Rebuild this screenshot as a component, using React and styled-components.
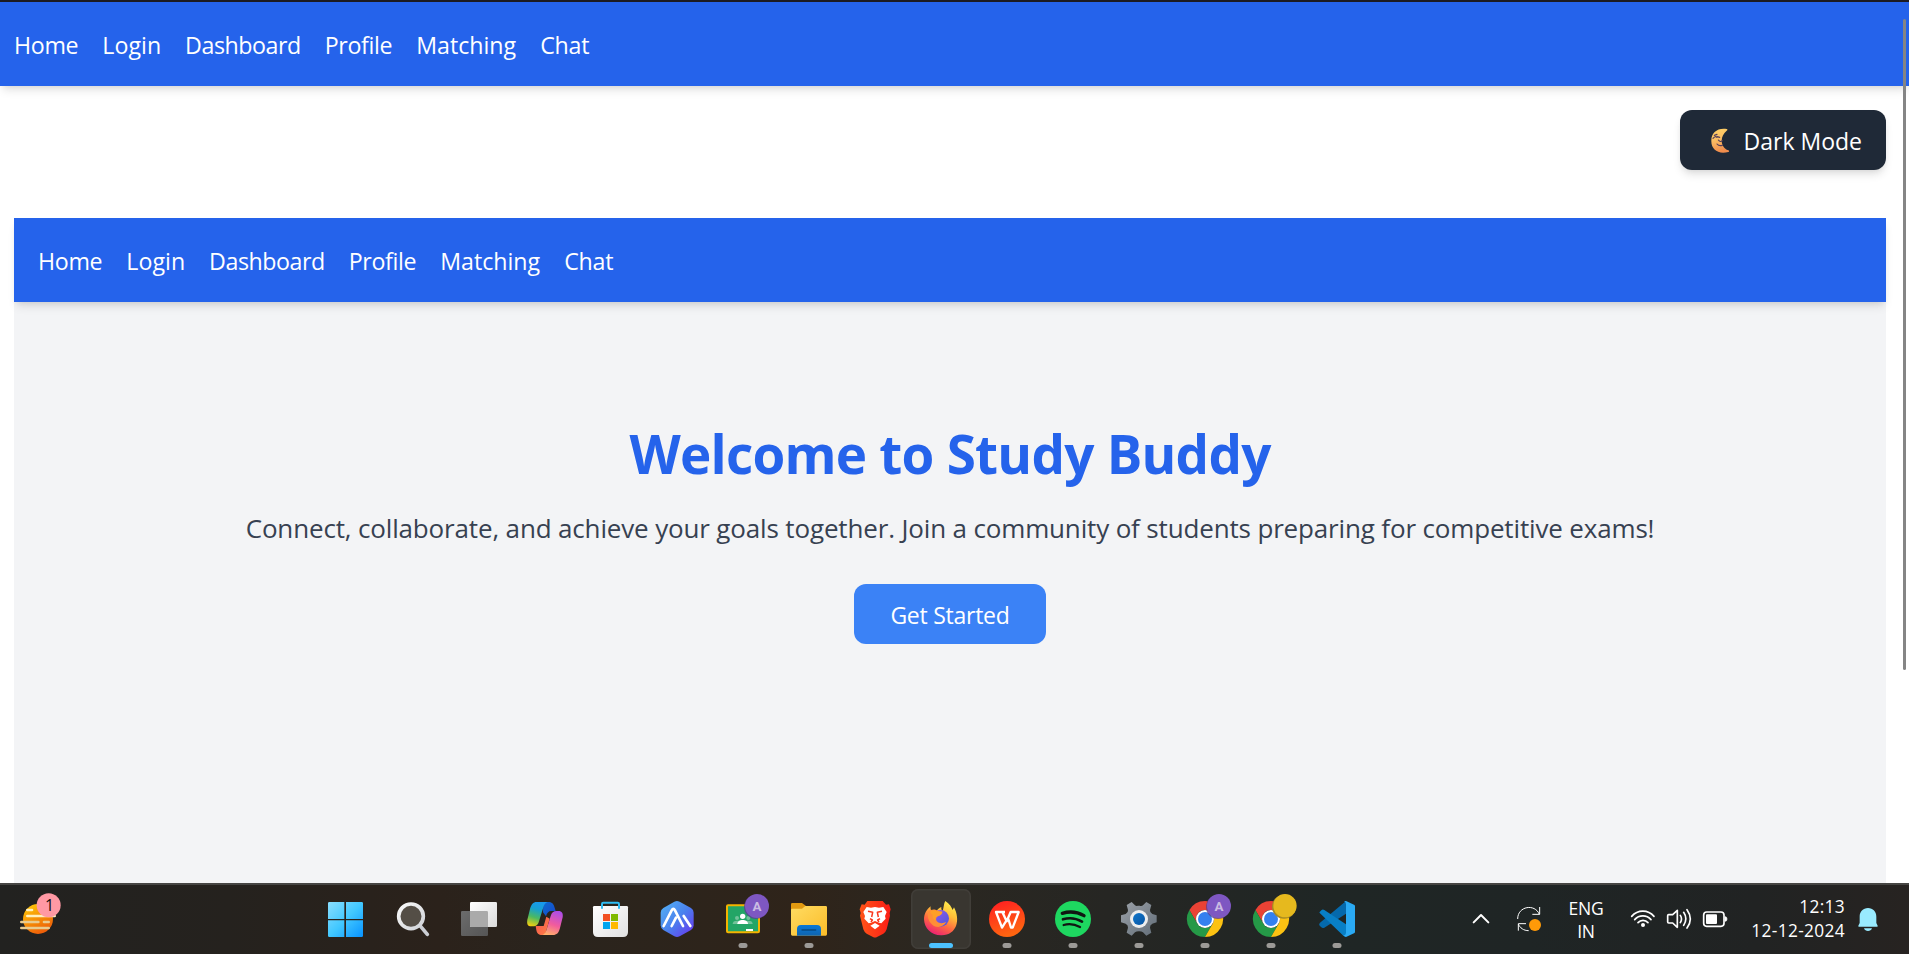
import React from "react";
import styled, { createGlobalStyle } from "styled-components";

const GlobalStyle = createGlobalStyle`
  *, *::before, *::after { box-sizing: border-box; }
  html, body { margin: 0; padding: 0; overflow: hidden; }
  body {
    background: #fff;
    font-family: "Open Sans", "Noto Sans", sans-serif;
  }
  h1, p { margin: 0; }
  button { font: inherit; border: 0; cursor: pointer; }
`;

const Screen = styled.div`
  display: flex;
  flex-direction: column;
  width: 1909px;
  height: 954px;
  overflow: hidden;
`;

const Browser = styled.div`
  position: relative;
  flex: 1;
  min-height: 0;
  overflow: hidden;
  background: #fff;
  border-top: 2px solid #1c1b22;
`;

const ScrollThumb = styled.div`
  position: absolute;
  top: 17px;
  right: 3px;
  width: 3px;
  height: 651px;
  border-radius: 2px;
  background: #858585;
`;

const NavBar = styled.nav`
  display: flex;
  align-items: center;
  gap: 24px;
  height: 84px;
  padding: 2px ${(p) => p.$inset}px 0;
  background: #2563eb;
  box-shadow: 0 6px 9px -1.5px rgba(0, 0, 0, 0.1), 0 3px 6px -3px rgba(0, 0, 0, 0.1);
`;

const NavLink = styled.a`
  width: ${(p) => p.$width}px;
  color: #fff;
  font-size: 23.2px;
  line-height: 36px;
  letter-spacing: ${(p) => p.$tracking}px;
  white-space: nowrap;
  text-decoration: none;
`;

const Content = styled.main`
  padding: 24px 23px 0 14px;
`;

const ThemeRow = styled.div`
  display: flex;
  justify-content: flex-end;
  margin-bottom: 48px;
`;

const ThemeButton = styled.button`
  display: flex;
  align-items: center;
  justify-content: space-between;
  width: 206px;
  height: 60px;
  padding: 2px 24px 0 30px;
  border-radius: 12px;
  background: #1f2937;
  color: #fff;
  font-size: 23px;
  line-height: 36px;
  box-shadow: 0 6px 9px -1.5px rgba(0, 0, 0, 0.1), 0 3px 6px -3px rgba(0, 0, 0, 0.1);
`;

const Panel = styled.section`
  height: 900px;
  background: #f3f4f6;
`;

const Hero = styled.div`
  display: flex;
  flex-direction: column;
  align-items: center;
  padding-top: 122px;
`;

const Title = styled.h1`
  color: #2563eb;
  font-size: 53px;
  font-weight: 700;
  line-height: 60px;
  letter-spacing: -0.75px;
  white-space: nowrap;
`;

const Lead = styled.p`
  margin-top: 23px;
  color: #374151;
  font-size: 26px;
  line-height: 42px;
  letter-spacing: -0.155px;
  white-space: nowrap;
`;

const StartButton = styled.button`
  width: 192px;
  height: 60px;
  margin-top: 35px;
  padding: 1px 0 0;
  border-radius: 12px;
  background: #3b82f6;
  color: #fff;
  font-size: 23px;
  line-height: 36px;
  letter-spacing: -0.25px;
`;

const Taskbar = styled.footer`
  display: flex;
  align-items: flex-start;
  height: 71px;
  border-top: 2px solid #464543;
  background: linear-gradient(90deg, #222220 0%, #25221e 12%, #2b221b 23%, #2a241d 29%, #2f241a 42%, #2a2721 50%, #262623 58%, #1f2625 70%, #1f2525 80%, #212323 92%, #272321 100%);
`;

const Weather = styled.div`
  width: 317px;
  padding: 4px 0 0 15px;
`;

const AppList = styled.div`
  display: flex;
  gap: 6px;
  padding-top: 4px;
`;

const AppButton = styled.div`
  position: relative;
  width: 60px;
  height: 60px;
  border-radius: 7px;
  background: ${(p) => (p.$active ? "#393630" : "transparent")};
  box-shadow: ${(p) => (p.$active ? "inset 0 0 0 1.5px #413e39" : "none")};

  &::after {
    content: "";
    position: absolute;
    bottom: 1px;
    left: 50%;
    transform: translateX(-50%);
    width: ${(p) => (p.$active ? 24 : 9)}px;
    height: 5px;
    border-radius: 3px;
    background: ${(p) => (p.$active ? "#4cc2ff" : p.$running ? "#9c9a97" : "transparent")};
  }
`;

const Glyph = styled.svg`
  display: block;
  flex: none;
`;

const Tray = styled.div`
  display: flex;
  align-items: center;
  margin-left: auto;
  height: 68px;
  padding-right: 29px;
  color: #fff;
`;

const StatusIcons = styled.div`
  display: flex;
  gap: 9px;
  margin-left: 19px;
`;

const Language = styled.div`
  width: 50px;
  margin-left: 17px;
  padding-top: 1px;
  font-size: 17.5px;
  line-height: 23px;
  letter-spacing: -0.2px;
  text-align: center;
`;

const SyncButton = styled.div`
  margin-left: 22px;
`;

const Clock = styled.div`
  width: 116px;
  margin-right: 11px;
  font-size: 17.3px;
  line-height: 24px;
  letter-spacing: 0.35px;
  text-align: right;
`;

const links = [
  ["Home", 64.3, -0.3],
  ["Login", 58.8, 0.05],
  ["Dashboard", 115.6, -0.45],
  ["Profile", 67.5, -0.33],
  ["Matching", 100, 0],
  ["Chat", 48.8, -0.2],
];

function Navigation({ inset }) {
  return (
    <NavBar $inset={inset}>
      {links.map(([label, width, tracking]) => (
        <NavLink key={label} $width={width} $tracking={tracking}>
          {label}
        </NavLink>
      ))}
    </NavBar>
  );
}

/* Icons share a grid of three units to the pixel. */
function Icon({ x, y = 45, w = 180, h = 180, children }) {
  return (
    <Glyph width={w / 3} height={h / 3} viewBox={`${x} ${y} ${w} ${h}`} fill="none">
      {children}
    </Glyph>
  );
}

function Gradient({ id, from, mid, to, x2 = 1, y2 = 1 }) {
  return (
    <linearGradient id={id} x1="0" y1="0" x2={x2} y2={y2}>
      <stop offset="0" stopColor={from} />
      {mid && <stop offset="0.5" stopColor={mid} />}
      <stop offset="1" stopColor={to} />
    </linearGradient>
  );
}

const Moon = () => (
  <Glyph width="20" height="26" viewBox="0 0 60 78" fill="none">
    <defs>
      <Gradient id="moon" from="#ffd266" mid="#fbbd63" to="#f08d4d" x2={0.2} />
    </defs>
    <path d="M50 3C21-1 3 15 4 40c0 25 21 40 51 32 3-1 3-4 0-5C31 58 28 26 50 8c3-2 3-4 0-5Z" fill="url(#moon)" />
    <path d="M9 31c4-5 9-7 12-3M22 26l7 2M13 22l8-3M25 36c4 5 9 6 12 2M21 48c4 5 10 6 16 4" stroke="#56405a" strokeWidth="3.5" strokeLinecap="round" />
  </Glyph>
);

const WeatherIcon = () => (
  <Icon x={45} y={45} w={150}>
    <defs><Gradient id="sun" from="#ffcf05" to="#ee6009" x2={0.5} /></defs>
    <circle cx="114" cy="135" r="45" fill="url(#sun)" />
    <path d="M82 108h14M82 126h82" stroke="#fff0bd" strokeWidth="8" strokeLinecap="round" />
    <path d="M64 144h51M132 144h14M64 162h82" stroke="#e8cb90" strokeWidth="8" strokeLinecap="round" />
    <circle cx="146" cy="94" r="36" fill="#ff99a4" />
    <text x="149" y="110" textAnchor="middle" fontFamily="Open Sans, sans-serif" fontSize="48" fill="#111">1</text>
  </Icon>
);

const Start = () => (
  <Icon x={21}>
    <defs><linearGradient id="win" x1="54" y1="84" x2="159" y2="189" gradientUnits="userSpaceOnUse"><stop stopColor="#8adfff" /><stop offset=".5" stopColor="#42c8ff" /><stop offset="1" stopColor="#0893ff" /></linearGradient></defs>
    <path d="M58 84h45v51H54V88q0-4 4-4ZM108 84h47q4 0 4 4v47h-51ZM54 139h49v50H58q-4 0-4-4ZM108 139h51v46q0 4-4 4h-47Z" fill="url(#win)" />
  </Icon>
);

const Search = () => (
  <Icon x={219}>
    <defs><Gradient id="lens" from="#fafafa" to="#cfd2d7" /></defs>
    <path d="m330 155 22 26" stroke="#cbced4" strokeWidth="11" strokeLinecap="round" />
    <circle cx="303" cy="127" r="37" fill="#544e46" stroke="url(#lens)" strokeWidth="11" />
  </Icon>
);

const TaskView = () => (
  <Icon x={417}>
    <defs><Gradient id="sheet" from="#fff" to="#dadada" /><Gradient id="back" from="#6c6c6c" to="#555" /></defs>
    <rect x="453" y="111" width="81" height="75" rx="4" fill="url(#back)" />
    <rect x="480" y="84" width="81" height="75" rx="4" fill="url(#sheet)" />
    <path d="M480 111h50q4 0 4 4v44h-50q-4 0-4-4Z" fill="#aaa" />
  </Icon>
);

const Copilot = () => (
  <Icon x={615}>
    <defs>
      <linearGradient id="cpa" x1="690" y1="84" x2="666" y2="158" gradientUnits="userSpaceOnUse"><stop stopColor="#1998ee" /><stop offset=".3" stopColor="#16a0d2" /><stop offset=".63" stopColor="#4bb961" /><stop offset="1" stopColor="#f9cf0c" /></linearGradient>
      <linearGradient id="cpb" x1="740" y1="112" x2="715" y2="183" gradientUnits="userSpaceOnUse"><stop stopColor="#ad4de8" /><stop offset=".55" stopColor="#f25c9c" /><stop offset="1" stopColor="#ffb16a" /></linearGradient>
      <Gradient id="cpc" from="#0d6bd1" to="#1746c8" />
      <Gradient id="cpd" from="#f5534e" to="#ff8146" />
    </defs>
    <path d="M700 84h14c12 0 16 5 19 14l4 13h-13c-9 0-13 6-16 16l-9-12Z" fill="url(#cpc)" />
    <path d="M677 156h24l8-28 10 6-14 49h-8c-12 0-16-5-18-15Z" fill="url(#cpd)" />
    <path d="M680 84h33c-7 2-10 7-13 16l-13 42c-3 10-7 15-18 15h-5c-11 0-14-7-12-20l8-32c4-14 9-21 20-21Z" fill="url(#cpa)" />
    <path d="M697 183c7-2 10-7 13-17l12-40c3-10 8-15 18-15h5c11 0 15 7 13 19l-8 32c-4 15-10 21-21 21Z" fill="url(#cpb)" />
  </Icon>
);

const Store = () => (
  <Icon x={18}>
    <defs><Gradient id="bag" from="#fff" to="#e1e1e1" /></defs>
    <path d="M54 100q0-4 4-4h97q4 0 4 4v74q0 15-15 15H69q-15 0-15-15Z" fill="url(#bag)" />
    <path d="M81 104V90q0-4 4-4h43q4 0 4 4v14" stroke="#2fbdf4" strokeWidth="6" />
    <path d="M84 120h21v21H84Z" fill="#f25022" /><path d="M108 120h21v21h-21Z" fill="#7fba00" />
    <path d="M84 144h21v21H84Z" fill="#00a4ef" /><path d="M108 144h21v21h-21Z" fill="#ffb900" />
  </Icon>
);

const Hexagon = () => (
  <Icon x={216}>
    <defs><Gradient id="hex" from="#54b5f5" mid="#4a82ee" to="#6a2fee" /></defs>
    <path d="M298 83q8-4 16 0l34 19q8 5 8 14v38q0 9-8 14l-34 19q-8 4-16 0l-33-19q-8-5-8-14v-38q0-9 8-14Z" fill="url(#hex)" />
    <path d="m266 156 24-47q5-9 10 0l24 47M290 156l13-25M326 126l20 30" stroke="#fff" strokeWidth="8" strokeLinecap="round" strokeLinejoin="round" />
  </Icon>
);

const AvatarBadge = ({ cx }) => (
  <>
    <circle cx={cx - 3} cy="99" r="36" fill="#5c3b91" opacity=".75" />
    <circle cx={cx} cy="96" r="36" fill="#7e57c2" />
    <text x={cx} y="111" textAnchor="middle" fontFamily="Roboto, sans-serif" fontSize="40" fontWeight="700" fill="#cbbbe3">A</text>
  </>
);

const Classroom = () => (
  <Icon x={414}>
    <rect x="456" y="94" width="96" height="81" rx="3" fill="#23a566" stroke="#f4b400" strokeWidth="6" />
    <circle cx="503" cy="127" r="8" fill="#fff" />
    <circle cx="486" cy="132" r="6" fill="#71c29a" /><circle cx="520" cy="132" r="6" fill="#71c29a" />
    <path d="M473 150q0-10 13-10h34q13 0 13 10Z" fill="#71c29a" />
    <path d="M487 150c0-8 8-12 16-12s16 4 16 12Z" fill="#fff" />
    <path d="M513 165h21v6h-21Z" fill="#fff" />
    <AvatarBadge cx={546} />
  </Icon>
);

const Explorer = () => (
  <Icon x={612}>
    <defs><Gradient id="folder" from="#ffdc62" to="#fbbc29" /><Gradient id="tray" from="#0878d7" to="#1064ae" x2={0} /></defs>
    <path d="M648 91q0-4 4-4h29l12 9v14h-45Z" fill="#e29a11" />
    <path d="M648 108q0-4 4-4h29l10-8h61q4 0 4 4v81q0 4-4 4H652q-4 0-4-4Z" fill="url(#folder)" />
    <path d="M666 185v-20q0-12 12-12h48q12 0 12 12v20Z" fill="url(#tray)" />
    <path d="M681 168h41" stroke="#064a83" strokeWidth="4" strokeLinecap="round" />
  </Icon>
);

const Brave = () => (
  <Icon x={15}>
    <defs><Gradient id="brave" from="#ff5418" to="#fb1d16" y2={0} /></defs>
    <path d="m82 81h46l10 11 9-1 5 15-3 11 1 8-10 41q-3 9-10 13l-19 10q-6 3-12 0l-19-10q-7-4-10-13L60 125l2-8-3-11 6-15 9 1Z" fill="url(#brave)" />
    <path d="m80 99 13 2 12-2 12 2 13-2 10 15-5 12 2 8-13 14-7-2-12-5-12 5-7 2-13-14 2-8-5-12Z" fill="#fff" />
    <path d="m84 112 14 3-3 14M126 112l-14 3 3 14M90 134l7 4-4 6M120 134l-7 4 4 6" stroke="#fa371b" strokeWidth="4.5" strokeLinejoin="round" />
    <path d="m105 147 14 8-14 11-14-11Z" fill="#fff" />
  </Icon>
);

const Firefox = () => (
  <Icon x={213}>
    <defs>
      <linearGradient id="fox" x1="330" y1="82" x2="280" y2="184" gradientUnits="userSpaceOnUse"><stop stopColor="#fff04e" /><stop offset=".35" stopColor="#ffbd38" /><stop offset=".65" stopColor="#ff6a40" /><stop offset="1" stopColor="#e91a78" /></linearGradient>
      <Gradient id="globe" from="#9959ed" to="#4957d9" />
    </defs>
    <path d="M316 81c13 9 19 19 22 27l4-8c20 38 9 83-37 84-31 1-52-21-53-48 0-17 8-30 20-39-1 5 0 10 2 14l15 1c3-6 9-10 15-13-1 6 1 10 4 12 4-12 3-22 8-30Z" fill="url(#fox)" />
    <circle cx="302" cy="133" r="25" fill="url(#globe)" />
    <path d="M265 112c8-7 22-8 29-1l13 2c0 8-7 11-13 14-7 3-8 13-1 17 6 5 17 4 26 0-8 15-29 20-42 8-14-12-15-26-12-40Z" fill="#ff8e37" />
    <path d="M272 111c7-4 16-3 21 1l14 1c0 7-7 10-12 12-6 2-11 8-8 14-11-5-9-13-9-17-7-3-7-7-6-11Z" fill="#ff9f27" />
  </Icon>
);

const Wps = () => (
  <Icon x={411}>
    <defs><Gradient id="wps" from="#ff1b23" to="#ff6410" x2={0.35} /></defs>
    <circle cx="501" cy="135" r="54" fill="url(#wps)" />
    <path d="M495 114h-27l18 47 18-29 9 29h5l18-47h-24l-12 28-13-28" stroke="#fff" strokeWidth="7" strokeLinejoin="round" />
  </Icon>
);

const Spotify = () => (
  <Icon x={609}>
    <circle cx="699" cy="135" r="54" fill="#1ed760" />
    <path d="M667 118c22-7 46-4 65 7" stroke="#101712" strokeWidth="10" strokeLinecap="round" />
    <path d="M669 136c20-6 40-3 57 7" stroke="#101712" strokeWidth="8" strokeLinecap="round" />
    <path d="M671 153c17-5 34-2 49 6" stroke="#101712" strokeWidth="7" strokeLinecap="round" />
  </Icon>
);

const Settings = () => (
  <Icon x={12}>
    <defs><Gradient id="gear" from="#9ba1a8" to="#626d78" /><Gradient id="hub" from="#1276c9" to="#0755a5" /></defs>
    <path d="m80 84 10 10q4 3 8 1l6 0q6 2 10-1l10-10 15 9-4 15q-1 8 7 12l13 4v21l-13 4q-8 4-7 12l4 15-15 9-10-10q-4-3-12-3t-12 3l-10 10-15-9 4-15q1-8-7-12l-14-4v-21l14-4q8-4 7-12l-4-15Z" fill="url(#gear)" />
    <circle cx="102" cy="135" r="27" fill="#eee" />
    <circle cx="102" cy="135" r="18" fill="url(#hub)" />
  </Icon>
);

const ChromeBody = ({ cx }) => (
  <g transform={`translate(${cx} 135)`}>
    <path d="M-46.8-27A54 54 0 0 1 46.8-27H0A27 27 0 0 0-23.4 13.5Z" fill="#e94235" />
    <path d="M-46.8-27A54 54 0 0 0 0 54L23.4 13.5A27 27 0 0 1-23.4 13.5Z" fill="#259947" />
    <path d="M0 54A54 54 0 0 0 46.8-27H0A27 27 0 0 1 23.4 13.5Z" fill="#fcc212" />
    <circle r="27" fill="#fff" />
    <circle r="21" fill="#3480ef" />
  </g>
);

const ChromeAccount = () => (
  <Icon x={210}>
    <ChromeBody cx={300} />
    <AvatarBadge cx={342} />
  </Icon>
);

const ChromeYellow = () => (
  <Icon x={408}>
    <ChromeBody cx={498} />
    <circle cx="537" cy="98" r="36" fill="#a68a25" />
    <circle cx="540" cy="95" r="35" fill="#e6b91e" />
  </Icon>
);

const VsCode = () => (
  <Icon x={606}>
    <path d="M723 81v38l-65 42q-5 3-9-1l-5-5q-4-5 1-9Z" fill="#0569ac" />
    <path d="m645 118 70 67 8 4v-38l-65-43q-5-3-9 1l-5 5q-2 2 1 4Z" fill="#087fc6" />
    <path d="m717 82 6-1 24 11q3 1 3 5v76q0 4-3 5l-24 11-8-4q8-1 8-8V91q0-7-6-9Z" fill="#2aaaf4" />
  </Icon>
);

const apps = [
  { Art: Start },
  { Art: Search },
  { Art: TaskView },
  { Art: Copilot },
  { Art: Store },
  { Art: Hexagon },
  { Art: Classroom, running: true },
  { Art: Explorer, running: true },
  { Art: Brave },
  { Art: Firefox, active: true },
  { Art: Wps, running: true },
  { Art: Spotify, running: true },
  { Art: Settings, running: true },
  { Art: ChromeAccount, running: true },
  { Art: ChromeYellow, running: true },
  { Art: VsCode, running: true },
];

const Chevron = () => (
  <Icon x={60} y={90} w={66} h={90}>
    <path d="m71 145 22-22 22 22" stroke="#fff" strokeWidth="6" strokeLinecap="round" strokeLinejoin="round" />
  </Icon>
);

const Sync = () => (
  <Icon x={192} y={90} w={90} h={90}>
    <path d="M203 135c0-39 52-47 65-14M269 99v22h-22M205 170v-21h23M205 150c5 12 16 20 31 20" stroke="#fff" strokeWidth="3" />
    <circle cx="255" cy="153" r="18" fill="#ff9a08" />
  </Icon>
);

const Wifi = () => (
  <Icon x={540} y={90} w={81} h={90}>
    <path d="M545 127c18-21 49-21 67 0M554 137c13-15 36-15 49 0M564 146c8-9 22-9 30 0" stroke="#fff" strokeWidth="5" strokeLinecap="round" />
    <circle cx="579" cy="153" r="6" fill="#fff" />
  </Icon>
);

const Speaker = () => (
  <Icon x={648} y={90} w={81} h={90}>
    <path d="M653 125q0-3 3-3h12l14-13v51l-14-13h-12q-3 0-3-3ZM691 124q7 11 0 22M701 115q13 19 0 39M711 107q20 28 0 55" stroke="#fff" strokeWidth="5" strokeLinecap="round" strokeLinejoin="round" />
  </Icon>
);

const Battery = () => (
  <Icon x={756} y={90} w={81} h={90}>
    <rect x="761" y="114" width="61" height="43" rx="9" stroke="#fff" strokeWidth="5" />
    <rect x="768" y="121" width="33" height="29" rx="3" fill="#fff" />
    <path d="M825 128q6 0 6 7t-6 7Z" fill="#fff" stroke="#fff" strokeWidth="2" />
  </Icon>
);

const Bell = () => (
  <Icon x={1218} y={90} w={72} h={90}>
    <path d="M1254 102c-15 0-25 11-25 26v19l-4 8q-1 3 2 3h54q3 0 2-3l-4-8v-19c0-15-10-26-25-26ZM1242 163h24c-3 11-21 11-24 0Z" fill="#99ebff" />
  </Icon>
);

export default function App() {
  return (
    <Screen>
      <GlobalStyle />
      <Browser>
        <Navigation inset={14} />
        <Content>
          <ThemeRow>
            <ThemeButton>
              <Moon />
              <span>Dark Mode</span>
            </ThemeButton>
          </ThemeRow>
          <Panel>
            <Navigation inset={24} />
            <Hero>
              <Title>Welcome to Study Buddy</Title>
              <Lead>
                Connect, collaborate, and achieve your goals together. Join a community of students preparing for competitive exams!
              </Lead>
              <StartButton>Get Started</StartButton>
            </Hero>
          </Panel>
        </Content>
        <ScrollThumb />
      </Browser>
      <Taskbar>
        <Weather>
          <WeatherIcon />
        </Weather>
        <AppList>
          {apps.map(({ Art, running, active }, i) => (
            <AppButton key={i} $running={running} $active={active}>
              <Art />
            </AppButton>
          ))}
        </AppList>
        <Tray>
          <Chevron />
          <SyncButton>
            <Sync />
          </SyncButton>
          <Language>
            ENG
            <br />
            IN
          </Language>
          <StatusIcons>
            <Wifi />
            <Speaker />
            <Battery />
          </StatusIcons>
          <Clock>
            12:13
            <br />
            12-12-2024
          </Clock>
          <Bell />
        </Tray>
      </Taskbar>
    </Screen>
  );
}
